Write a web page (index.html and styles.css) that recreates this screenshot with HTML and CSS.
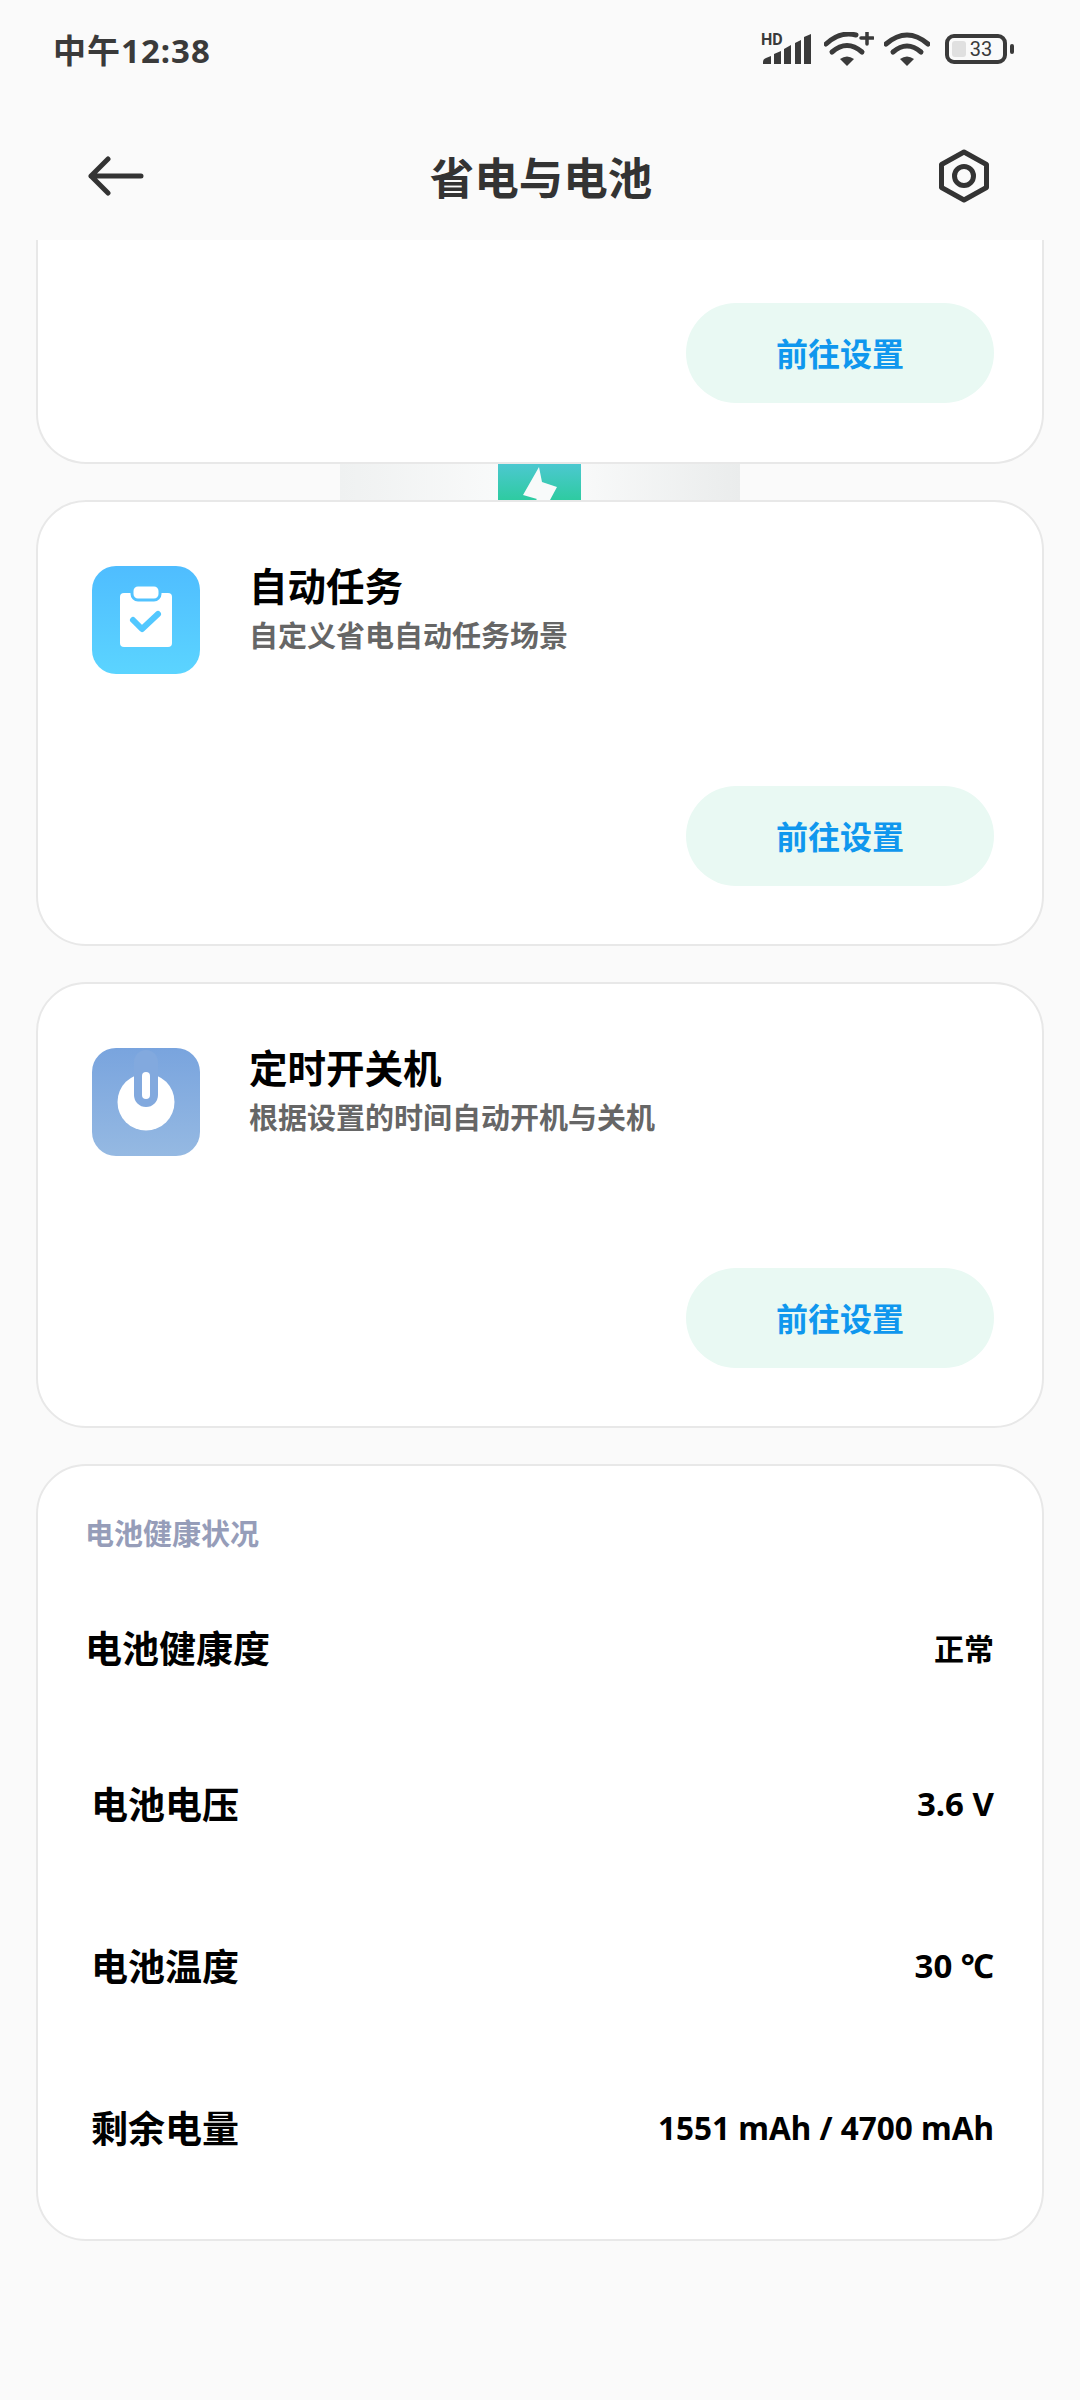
FILE: index.html
```html
<!DOCTYPE html>
<html lang="zh-CN">
<head>
    <meta charset="UTF-8">
    <title>省电与电池</title>
    <link rel="stylesheet" href="styles.css">
</head>
<body>
    <!-- 状态栏 -->
    <div class="status-bar">
        <span class="status-time">中午12:38</span>
        <div class="status-icons">
            <div class="signal">
                <span class="hd-text">HD</span>
                <svg class="icon-signal" width="50" height="32" viewBox="0 0 50 32">
                    <path d="M2 29 Q2 26 5 25 L10 23 V31 H2 Z"/>
                    <path d="M13 21 L20 18 V31 H13 Z"/>
                    <path d="M23 16 L30 12 V31 H23 Z"/>
                    <path d="M34 10 L40 7 V31 H34 Z"/>
                    <path d="M43 4 L50 1 V31 H43 Z"/>
                </svg>
            </div>
            <svg class="icon-wifi-plus" width="50" height="34" viewBox="0 0 50 34">
                <path class="wifi-arc" d="M2 12 Q16 -1 32 3"/>
                <path class="wifi-arc" d="M8 20 Q23 7 38 20"/>
                <path d="M16 27 Q23 22 30 27 L23 34 Z"/>
                <path class="wifi-arc thin" d="M43 0 V12 M37 6 H49"/>
            </svg>
            <svg class="icon-wifi" width="46" height="34" viewBox="0 0 46 34">
                <path class="wifi-arc" d="M2 12 Q23 -6 44 12"/>
                <path class="wifi-arc" d="M9 20 Q23 8 37 20"/>
                <path d="M16 27 Q23 22 30 27 L23 34 Z"/>
            </svg>
            <div class="battery">
                <div class="battery-body">
                    <div class="battery-fill"></div>
                    <span class="battery-num">33</span>
                </div>
                <div class="battery-nub"></div>
            </div>
        </div>
    </div>

    <!-- 标题栏 -->
    <div class="title-bar">
        <svg class="icon-back" width="56" height="42" viewBox="0 0 56 42">
            <path d="M53 20 H3 M20 3 L3 20 L20 37"/>
        </svg>
        <h1 class="page-title">省电与电池</h1>
        <svg class="icon-settings" width="50" height="54" viewBox="0 0 50 54">
            <polygon points="25,3 47.5,15.5 47.5,38.5 25,51 2.5,38.5 2.5,15.5"/>
            <circle cx="25" cy="27" r="9.5"/>
        </svg>
    </div>

    <div class="content">
        <!-- 被滚动裁掉的卡片 -->
        <div class="card card-cut">
            <a class="go-btn">前往设置</a>
        </div>

        <!-- 卡片之间露出的横幅 -->
        <div class="peek">
            <div class="peek-strip">
                <svg class="peek-logo" width="83" height="36" viewBox="0 0 83 36">
                    <path d="M41 3 L25 31 L39 35 L38 36 L52 36 L59 23 L44 18 Z"/>
                </svg>
            </div>
        </div>

        <div class="card card-feature">
            <div class="feature-info">
                <svg class="feature-icon" width="108" height="108" viewBox="0 0 108 108">
                    <defs>
                        <linearGradient id="blue-grad" x1="0" y1="0" x2="0" y2="1">
                            <stop offset="0" stop-color="#4fbdff"/>
                            <stop offset="1" stop-color="#5bd4ff"/>
                        </linearGradient>
                    </defs>
                    <rect width="108" height="108" rx="24" fill="url(#blue-grad)"/>
                    <rect x="28" y="27" width="52" height="54" rx="4" fill="#fff"/>
                    <rect x="40" y="19" width="28" height="15" rx="6" fill="#fff" stroke="#52c3ff" stroke-width="3"/>
                    <path d="M41 54 L50 63 L66 48" fill="none" stroke="#52c8ff" stroke-width="6" stroke-linecap="round" stroke-linejoin="round"/>
                </svg>
                <div>
                    <div class="feature-title">自动任务</div>
                    <div class="feature-desc">自定义省电自动任务场景</div>
                </div>
            </div>
            <a class="go-btn">前往设置</a>
        </div>

        <div class="card card-feature">
            <div class="feature-info">
                <svg class="feature-icon" width="108" height="108" viewBox="0 0 108 108">
                    <defs>
                        <linearGradient id="power-grad" x1="0" y1="0" x2="0" y2="1">
                            <stop offset="0" stop-color="#79a4de"/>
                            <stop offset="1" stop-color="#95b9e2"/>
                        </linearGradient>
                    </defs>
                    <rect width="108" height="108" rx="24" fill="url(#power-grad)"/>
                    <circle cx="54" cy="54" r="28.5" fill="#fff"/>
                    <path d="M54 14 V47" stroke="#82a9de" stroke-width="24" stroke-linecap="round"/>
                    <path d="M54 28 V47" stroke="#fff" stroke-width="8" stroke-linecap="round"/>
                </svg>
                <div>
                    <div class="feature-title">定时开关机</div>
                    <div class="feature-desc">根据设置的时间自动开机与关机</div>
                </div>
            </div>
            <a class="go-btn">前往设置</a>
        </div>

        <!-- 电池健康状况 -->
        <div class="card card-health">
            <div class="health-title">电池健康状况</div>
            <div class="health-row row-first">
                <span class="row-name">电池健康度</span>
                <span class="row-value value-small">正常</span>
            </div>
            <div class="health-row">
                <span class="row-name">电池电压</span>
                <span class="row-value value-short">3.6 V</span>
            </div>
            <div class="health-row">
                <span class="row-name">电池温度</span>
                <span class="row-value value-short">30 ℃</span>
            </div>
            <div class="health-row">
                <span class="row-name">剩余电量</span>
                <span class="row-value">1551 mAh / 4700 mAh</span>
            </div>
        </div>
    </div>
</body>
</html>
```

FILE: styles.css
```css
body {
    margin: 0;
    width: 1080px;
    height: 2400px;
    overflow: hidden;
    background-color: #fafafa;
    font-family: "Noto Sans", "Noto Sans CJK SC", sans-serif;
}

/* 状态栏 */
.status-bar {
    height: 98px;
    box-sizing: border-box;
    padding: 0 66px 0 53px;
    display: flex;
    justify-content: space-between;
    align-items: center;
    color: #3a3a3a;
}
.status-time {
    font-size: 33px;
    font-weight: 700;
    letter-spacing: 1px;
}
.status-icons {
    display: flex;
    align-items: center;
}
.status-icons svg {
    fill: #3a3a3a;
    display: block;
}
.signal {
    position: relative;
}
.hd-text {
    position: absolute;
    left: 0;
    top: 0;
    font-family: "Roboto", sans-serif;
    font-size: 16px;
    line-height: 14px;
    font-weight: 700;
}
.wifi-arc {
    fill: none;
    stroke: #3a3a3a;
    stroke-width: 5;
    stroke-linecap: round;
}
.wifi-arc.thin {
    stroke-width: 3.5;
}
.icon-wifi-plus {
    margin-left: 13px;
}
.icon-wifi {
    margin-left: 10px;
}
.battery {
    margin-left: 15px;
    display: flex;
    align-items: center;
}
.battery-body {
    position: relative;
    width: 62px;
    height: 30px;
    box-sizing: border-box;
    border: 4px solid #3a3a3a;
    border-radius: 9px;
    display: flex;
    justify-content: center;
    align-items: center;
}
.battery-fill {
    position: absolute;
    left: 3px;
    top: 3px;
    width: 14px;
    height: 16px;
    background-color: #e0e0e0;
    border-radius: 3px;
}
.battery-num {
    position: relative;
    margin-left: 10px;
    font-family: "Roboto", sans-serif;
    font-size: 20px;
    line-height: 22px;
}
.battery-nub {
    width: 4px;
    height: 10px;
    margin-left: 3px;
    background-color: #3a3a3a;
    border-radius: 2px;
}

/* 标题栏 */
.title-bar {
    height: 142px;
    box-sizing: border-box;
    padding: 14px 91px 0 88px;
    display: grid;
    grid-template-columns: 1fr auto 1fr;
    align-items: center;
}
.icon-back {
    margin-top: 2px;
}
.page-title {
    margin: -2px 0 0 5px;
    font-size: 44.5px;
    font-weight: 700;
    color: #333;
}
.icon-back path {
    fill: none;
    stroke: #333;
    stroke-width: 5;
    stroke-linecap: round;
    stroke-linejoin: round;
}
.icon-settings {
    justify-self: end;
}
.icon-settings polygon,
.icon-settings circle {
    fill: none;
    stroke: #333;
    stroke-width: 5;
    stroke-linejoin: round;
}

/* 卡片 */
.content {
    padding: 0 36px;
    display: flex;
    flex-direction: column;
}
.card {
    box-sizing: border-box;
    background-color: #fff;
    border: 2px solid #e8e8e8;
    border-radius: 50px;
}
.card-cut {
    height: 224px;
    padding: 0 48px 59px;
    border-top: none;
    border-radius: 0 0 50px 50px;
    display: flex;
    justify-content: flex-end;
    align-items: flex-end;
}
.go-btn {
    width: 308px;
    height: 100px;
    padding-bottom: 2px;
    box-sizing: border-box;
    background-color: #e9f9f3;
    border-radius: 50px;
    color: #0f97ee;
    font-size: 32px;
    font-weight: 700;
    display: flex;
    justify-content: center;
    align-items: center;
}
.peek {
    height: 36px;
    display: flex;
    justify-content: center;
}
.peek-strip {
    width: 400px;
    background: linear-gradient(to right, #eff1f1, #fafbfb 45%, #fafbfb 55%, #eaecec);
    display: flex;
    justify-content: center;
}
.peek-logo {
    margin-right: 1px;
    background: linear-gradient(to bottom, #4cc8d0, #2ecba1);
    fill: #f8fafa;
}
.card-feature {
    height: 446px;
    margin-bottom: 36px;
    padding: 64px 48px 58px 54px;
    display: flex;
    flex-direction: column;
    justify-content: space-between;
    align-items: flex-end;
}
.feature-info {
    align-self: stretch;
    display: flex;
    gap: 49px;
}
.feature-title {
    margin-top: -2px;
    font-size: 38.5px;
    line-height: 44px;
    font-weight: 700;
    color: #000;
}
.feature-desc {
    margin-top: 8px;
    font-size: 29px;
    line-height: 40px;
    font-weight: 700;
    color: #666;
}

/* 电池健康状况 */
.card-health {
    height: 777px;
    padding: 48px 48px 0 47px;
}
.health-title {
    font-size: 29px;
    line-height: 40px;
    font-weight: 700;
    color: #969db9;
}
.health-row {
    height: 162px;
    padding-left: 6px;
    display: flex;
    justify-content: space-between;
    align-items: center;
    color: #000;
}
.row-first {
    padding-left: 0;
    height: 150px;
    margin-top: 18px;
}
.row-name {
    font-size: 37px;
    font-weight: 700;
}
.row-value {
    font-size: 31.5px;
    font-weight: 700;
}
.value-small {
    font-size: 30px;
}
.value-short {
    font-size: 33px;
}
```
